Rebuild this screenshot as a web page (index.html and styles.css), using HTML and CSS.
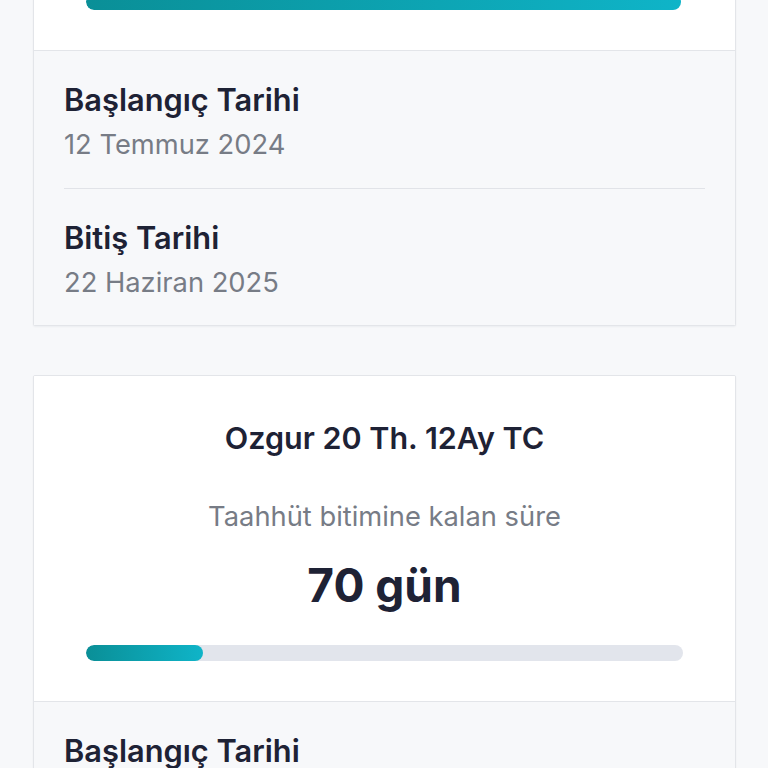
FILE: index.html
```html
<!DOCTYPE html>
<html lang="tr">
<head>
<meta charset="utf-8">
<title>Taahhüt</title>
<link rel="stylesheet" href="styles.css">
</head>
<body>
<main class="page">
  <section class="card">
    <div class="card-top card-top-scrolled">
      <div class="track"><div class="fill" style="width: 99.6%"></div></div>
    </div>
    <div class="card-dates">
      <div class="date-item">
        <div class="date-label">Başlangıç Tarihi</div>
        <div class="date-value">12 Temmuz 2024</div>
      </div>
      <div class="date-item">
        <div class="date-label">Bitiş Tarihi</div>
        <div class="date-value">22 Haziran 2025</div>
      </div>
    </div>
  </section>

  <section class="card">
    <div class="card-top">
      <h2 class="plan">Ozgur 20 Th. 12Ay TC</h2>
      <p class="remain-label">Taahhüt bitimine kalan süre</p>
      <p class="remain-value">70 gün</p>
      <div class="track"><div class="fill" style="width: 19.6%"></div></div>
    </div>
    <div class="card-dates">
      <div class="date-item">
        <div class="date-label">Başlangıç Tarihi</div>
        <div class="date-value">12 Temmuz 2024</div>
      </div>
      <div class="date-item">
        <div class="date-label">Bitiş Tarihi</div>
        <div class="date-value">22 Haziran 2025</div>
      </div>
    </div>
  </section>
</main>
</body>
</html>
```

FILE: styles.css
```css
* { box-sizing: border-box; }
html, body {
  margin: 0;
  padding: 0;
  background: #f7f8fa;
  font-family: "Inter", "Noto Sans", sans-serif;
  color: #1e2235;
  overflow: hidden;
}
.page {
  padding: 0 32px 40px 33px;
  margin-top: -6px;
}
.card {
  border: 1px solid #e3e5e9;
  border-radius: 2px;
  background: #ffffff;
  box-shadow: 0 1px 2px rgba(20, 30, 50, 0.05);
  margin-bottom: 49px;
  overflow: hidden;
}
.card:first-child {
  border-top: 0;
  border-radius: 0 0 2px 2px;
}
.card-top {
  background: #ffffff;
  padding: 40px 52px 40px;
  text-align: center;
  border-bottom: 1px solid #e3e5e9;
}
.card-top-scrolled {
  padding-top: 0;
}
.card-top-scrolled .track {
  margin-top: 0;
  background: transparent;
}
.plan {
  margin: 0;
  font-size: 30.5px;
  line-height: 44px;
  font-weight: 600;
  color: #1e2235;
}
.remain-label {
  margin: 39px 0 0;
  font-size: 27.3px;
  line-height: 36px;
  font-weight: 400;
  color: #777c86;
}
.remain-value {
  margin: 20px 0 0;
  font-size: 46px;
  line-height: 60px;
  font-weight: 700;
  color: #1e2235;
}
.track {
  margin-top: 30px;
  height: 16px;
  border-radius: 8px;
  background: #e2e5ec;
  overflow: hidden;
}
.fill {
  height: 100%;
  border-radius: 8px;
  background: linear-gradient(90deg, #0a8f97 0%, #0fb4c8 100%);
}
.card-dates {
  background: #f7f8fa;
  padding: 0 30px;
}
.date-item {
  padding: 29px 0 25px;
}
.date-item + .date-item {
  border-top: 1px solid #e1e3e8;
  padding-bottom: 24px;
}
.date-label {
  font-size: 30.8px;
  line-height: 40px;
  font-weight: 600;
  color: #1e2235;
}
.date-value {
  margin-top: 7px;
  font-size: 27.3px;
  line-height: 36px;
  font-weight: 400;
  color: #777c86;
}
```
